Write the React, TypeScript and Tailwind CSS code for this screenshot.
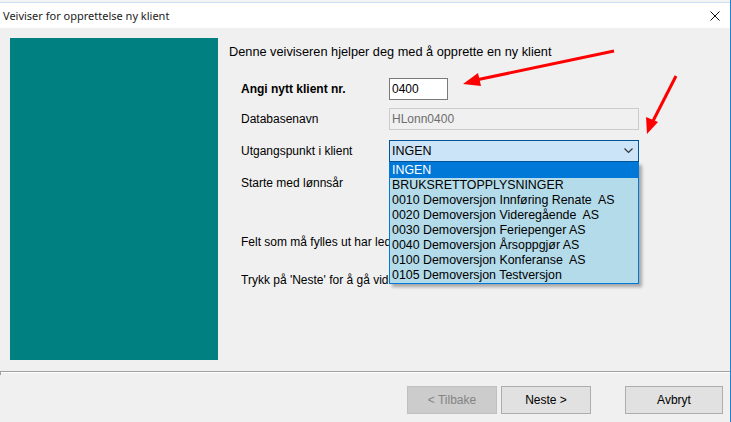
import React from 'react'

const items = [
  'INGEN',
  'BRUKSRETTOPPLYSNINGER',
  '0010 Demoversjon Innføring Renate  AS',
  '0020 Demoversjon Videregående  AS',
  '0030 Demoversjon Feriepenger AS',
  '0040 Demoversjon Årsoppgjør AS',
  '0100 Demoversjon Konferanse  AS',
  '0105 Demoversjon Testversjon',
]

function Row({ label, bold, children }: { label: string; bold?: boolean; children?: React.ReactNode }) {
  return (
    <div className="flex items-center h-[22px]">
      <div className={'w-[160px] pl-[12px] ' + (bold ? 'font-bold' : '')}>{label}</div>
      {children}
    </div>
  )
}

export default function App() {
  return (
    <div
      className="relative w-[731px] h-[422px] overflow-hidden bg-[#f0f0f0] border-r border-[#1883d7] text-[12px] leading-[15px] text-black whitespace-pre"
      style={{ fontFamily: '"Liberation Sans", Arial, sans-serif' }}
    >
      {/* title bar */}
      <div className="h-[3px] bg-[#f4f4f4] border-b border-[#c9dff3]" />
      <div className="h-[25px] bg-white flex items-center justify-between pl-[3px] pr-[10px]">
        <span className="text-[11px] text-[#1a1a1a]" style={{ fontFamily: '"Noto Sans", "Open Sans", sans-serif' }}>
          Veiviser for opprettelse ny klient
        </span>
        <svg width="10" height="10" viewBox="0 0 10 10">
          <path d="M0.5 0.5 L9.5 9.5 M9.5 0.5 L0.5 9.5" stroke="#111" strokeWidth="1" />
        </svg>
      </div>

      {/* body */}
      <div className="flex h-[343px]">
        <div className="ml-[10px] mt-[10px] w-[208px] h-[322px] bg-[#008080]" />
        <div className="ml-[11px] flex flex-col">
          <div className="mt-[16px] text-[12.75px]">Denne veiviseren hjelper deg med å opprette en ny klient</div>
          <div className="mt-[19px]">
            <Row label="Angi nytt klient nr." bold>
              <div className="w-[59px] h-[22px] bg-white border border-[#7a7a7a] flex items-center pl-[2px]">0400</div>
            </Row>
          </div>
          <div className="mt-[8px]">
            <Row label="Databasenavn">
              <div className="w-[250px] h-[22px] bg-[#f0f0f0] border border-[#cccccc] flex items-center pl-[2px] text-[#6d6d6d]">
                HLonn0400
              </div>
            </Row>
          </div>
          <div className="mt-[10px]">
            <Row label="Utgangspunkt i klient">
              <div className="w-[250px] h-[22px] bg-[#cce4f7] border border-[#005499] flex items-center justify-between pl-[2px] pr-[5px] text-[12.5px]">
                <span>INGEN</span>
                <svg width="9" height="6" viewBox="0 0 9 6">
                  <path d="M0.5 0.5 L4.5 4.5 L8.5 0.5" fill="none" stroke="#333" strokeWidth="1.2" />
                </svg>
              </div>
            </Row>
          </div>
          <div className="mt-[10px]">
            <Row label="Starte med lønnsår" />
          </div>
          <div className="mt-[41px] ml-[12px] w-[148px] overflow-hidden">Felt som må fylles ut har ledetekst i fet skrift.</div>
          <div className="mt-[23px] ml-[12px] w-[148px] overflow-hidden">Trykk på 'Neste' for å gå videre.</div>
        </div>
      </div>

      {/* separator */}
      <div className="relative h-[2px] border-t border-[#a0a0a0] bg-white">
        <div className="absolute left-0 top-0 w-px h-[3px] bg-[#a0a0a0]" />
      </div>

      {/* buttons */}
      <div className="flex pt-[13px] pl-[407px]">
        <div className="w-[90px] h-[28px] bg-[#cccccc] border border-[#bfbfbf] text-[#838383] flex items-center justify-center">
          &lt; Tilbake
        </div>
        <div className="ml-[4px] w-[90px] h-[28px] bg-[#e1e1e1] border border-[#adadad] flex items-center justify-center">
          Neste &gt;
        </div>
        <div className="ml-[34px] w-[98px] h-[28px] bg-[#e1e1e1] border border-[#adadad] flex items-center justify-center">
          Avbryt
        </div>
      </div>

      {/* open dropdown list */}
      <div className="absolute left-[389px] top-[162px] w-[250px] bg-[#b4dbea] border border-[#0078d7] shadow-[3px_3px_3px_rgba(0,0,0,0.3)] text-[12.4px]">
        {items.map((t, i) => (
          <div key={i} className={'h-[15px] pl-[2px] ' + (i === 0 ? 'bg-[#0078d7] text-white' : '')}>
            {t}
          </div>
        ))}
      </div>

      {/* red arrows */}
      <svg className="absolute left-0 top-0 pointer-events-none" width="731" height="422">
        <line x1="614" y1="51" x2="476" y2="80" stroke="#ff0000" strokeWidth="3" />
        <polygon points="463,84 478,73 481,86" fill="#ff0000" />
        <line x1="676" y1="76" x2="653" y2="121" stroke="#ff0000" strokeWidth="3" />
        <polygon points="647,134 646,117 658,122" fill="#ff0000" />
      </svg>
    </div>
  )
}
